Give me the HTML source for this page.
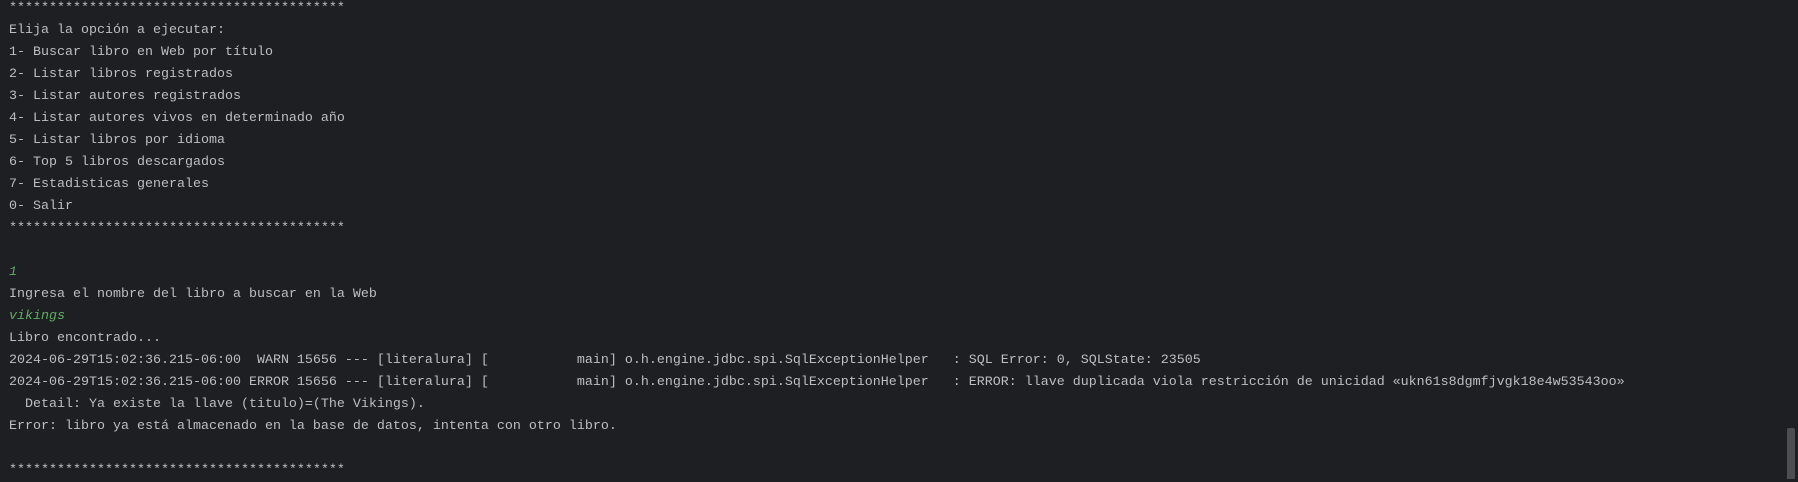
<!DOCTYPE html>
<html><head><meta charset="utf-8">
<style>
html,body{margin:0;padding:0;background:#1e1f22;width:1798px;height:479px;overflow:hidden}
pre{position:absolute;left:9px;top:-2px;margin:0;font-family:"Liberation Mono","DejaVu Sans Mono",monospace;font-size:13.33px;line-height:22px;color:#bcbec4;white-space:pre}
.g{color:#5fad65;font-style:italic}
.sb{position:absolute;left:1787px;top:428px;width:8px;height:51px;background:#4d4e51;border-radius:2px 2px 0 0}
</style></head><body>
<pre>******************************************
Elija la opción a ejecutar:
1- Buscar libro en Web por título
2- Listar libros registrados
3- Listar autores registrados
4- Listar autores vivos en determinado año
5- Listar libros por idioma
6- Top 5 libros descargados
7- Estadisticas generales
0- Salir
******************************************

<span class="g">1</span>
Ingresa el nombre del libro a buscar en la Web
<span class="g">vikings</span>
Libro encontrado...
2024-06-29T15:02:36.215-06:00  WARN 15656 --- [literalura] [           main] o.h.engine.jdbc.spi.SqlExceptionHelper   : SQL Error: 0, SQLState: 23505
2024-06-29T15:02:36.215-06:00 ERROR 15656 --- [literalura] [           main] o.h.engine.jdbc.spi.SqlExceptionHelper   : ERROR: llave duplicada viola restricción de unicidad «ukn61s8dgmfjvgk18e4w53543oo»
  Detail: Ya existe la llave (titulo)=(The Vikings).
Error: libro ya está almacenado en la base de datos, intenta con otro libro.

******************************************</pre>
<div class="sb"></div>
</body></html>
